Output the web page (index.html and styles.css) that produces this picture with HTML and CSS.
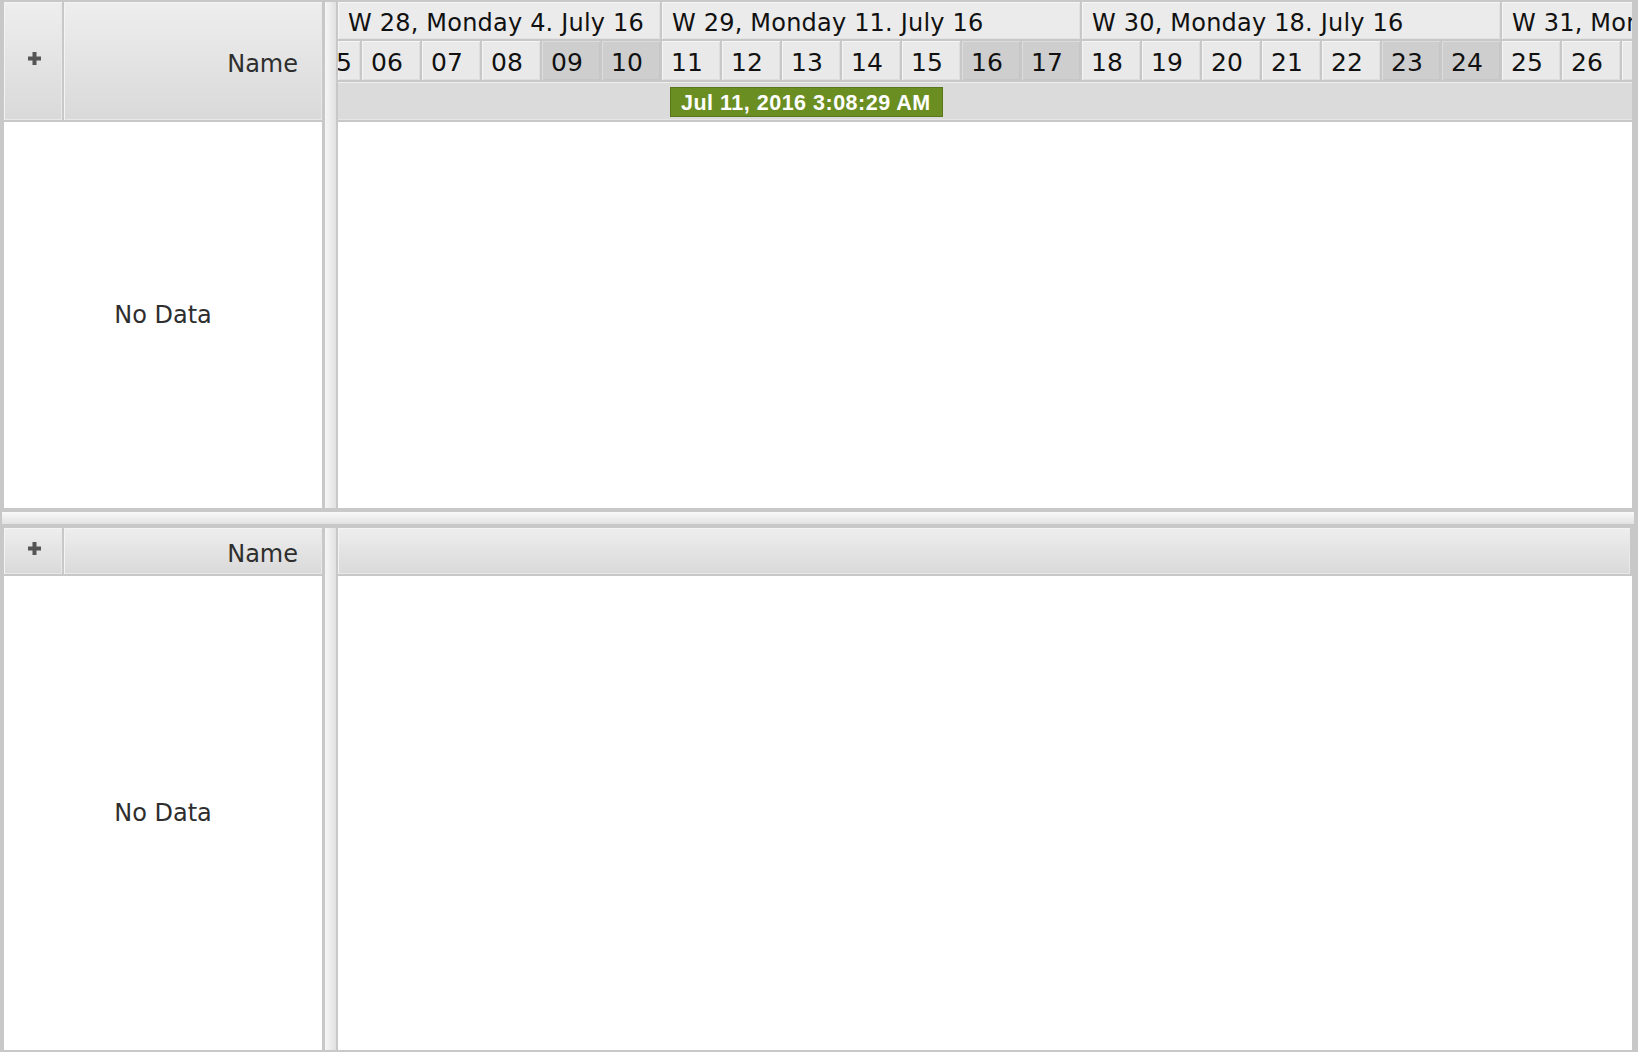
FILE: index.html
```html
<!DOCTYPE html>
<html>
<head>
<meta charset="utf-8">
<title>Gantt</title>
<link rel="stylesheet" href="styles.css">
</head>
<body>
<div class="app">
  <section class="pane pane-top">
    <div class="table">
      <div class="thead">
        <div class="hcell plus"><svg width="13" height="13" viewBox="0 0 13 13"><path d="M4.5 0h4v4.5h4.5v4h-4.5v4.5h-4v-4.5H0v-4h4.5z" fill="#555"/></svg></div>
        <div class="hcell name">Name</div>
      </div>
      <div class="tbody">No Data</div>
    </div>
    <div class="vsplit"></div>
    <div class="timeline">
      <div class="theader">
        <div class="weeks">
          <div class="week first">W 28, Monday 4. July 16</div>
          <div class="week">W 29, Monday 11. July 16</div>
          <div class="week">W 30, Monday 18. July 16</div>
          <div class="week">W 31, Monday 25. July 16</div>
        </div>
        <div class="days">
          <div class="day part">05</div>
          <div class="day">06</div>
          <div class="day">07</div>
          <div class="day">08</div>
          <div class="day we">09</div>
          <div class="day we">10</div>
          <div class="day">11</div>
          <div class="day">12</div>
          <div class="day">13</div>
          <div class="day">14</div>
          <div class="day">15</div>
          <div class="day we">16</div>
          <div class="day we">17</div>
          <div class="day">18</div>
          <div class="day">19</div>
          <div class="day">20</div>
          <div class="day">21</div>
          <div class="day">22</div>
          <div class="day we">23</div>
          <div class="day we">24</div>
          <div class="day">25</div>
          <div class="day">26</div>
          <div class="day">27</div>
        </div>
        <div class="band"><span class="now">Jul 11, 2016 3:08:29 AM</span></div>
      </div>
      <div class="tl-body"></div>
    </div>
  </section>
  <div class="hsplit"></div>
  <section class="pane pane-bottom">
    <div class="table">
      <div class="thead">
        <div class="hcell plus"><svg width="13" height="13" viewBox="0 0 13 13"><path d="M4.5 0h4v4.5h4.5v4h-4.5v4.5h-4v-4.5H0v-4h4.5z" fill="#555"/></svg></div>
        <div class="hcell name">Name</div>
      </div>
      <div class="tbody">No Data</div>
    </div>
    <div class="vsplit"></div>
    <div class="timeline">
      <div class="theader">
        <div class="hcell tl-empty"></div>
      </div>
      <div class="tl-body"></div>
    </div>
  </section>
</div>
</body>
</html>
```

FILE: styles.css
```css
* { box-sizing: border-box; }
html, body { margin: 0; padding: 0; }
body {
  font-family: "DejaVu Sans", "Liberation Sans", sans-serif;
  background: #c8c8c8;
}
.app {
  width: 1638px;
  height: 1052px;
  padding: 2px 4px 2px 2px;
  display: flex;
  flex-direction: column;
  background: #c8c8c8;
  overflow: hidden;
}
.pane {
  margin: 0 2px;
  display: flex;
  min-height: 0;
}
.pane-top { height: 506px; flex: none; }
.pane-bottom { flex: 1; }
.hsplit {
  flex: none;
  height: 12px;
  margin: 4px 0;
  background: linear-gradient(#f9f9f9, #e2e2e2);
}
.table {
  width: 318px;
  flex: none;
  display: flex;
  flex-direction: column;
  gap: 2px;
}
.thead {
  display: flex;
  gap: 2px;
  flex: none;
}
.pane-top .thead { height: 118px; }
.pane-bottom .thead { height: 46px; }
.hcell {
  background: linear-gradient(#eeeeee, #d9d9d9);
  box-shadow: inset 1px 1px 0 #f4f4f4, inset -1px -1px 0 #e9e9e9;
  display: flex;
  align-items: center;
}
.plus {
  width: 58px;
  justify-content: center;
}
.plus svg { margin: 0 0 5px 3px; }
.name {
  flex: 1;
  justify-content: flex-end;
  padding: 5px 24px 0 0;
  font-size: 24px;
  color: #2e2e2e;
}
.tbody {
  flex: 1;
  background: #fff;
  display: flex;
  align-items: center;
  justify-content: center;
  font-size: 24px;
  color: #2e2e2e;
}
.vsplit {
  width: 16px;
  flex: none;
  background: linear-gradient(to right, #c8c8c8 0, #c8c8c8 3px, #f6f6f6 3px, #e1e1e1 14px, #c8c8c8 14px);
}
.timeline {
  flex: 1;
  min-width: 0;
  display: flex;
  flex-direction: column;
  gap: 2px;
}
.theader {
  flex: none;
  display: flex;
  flex-direction: column;
  gap: 2px;
}
.pane-top .theader { height: 118px; }
.pane-bottom .theader { height: 46px; padding-right: 2px; }
.tl-empty { flex: 1; }
.weeks {
  height: 37px;
  display: flex;
  overflow: hidden;
  flex: none;
}
.week {
  flex: none;
  width: 420px;
  border-left: 2px solid #c8c8c8;
  background: #ebebeb;
  box-shadow: inset 1px 1px 0 #f5f5f5, inset -1px -1px 0 #e2e2e2;
  padding: 5px 0 0 10px;
  font-size: 24px;
  letter-spacing: 0.2px;
  color: #111;
  display: flex;
  align-items: center;
  white-space: nowrap;
}
.week.first { width: 322px; border-left: 0; }
.days {
  height: 39px;
  display: flex;
  overflow: hidden;
  flex: none;
}
.day {
  flex: none;
  width: 60px;
  border-left: 2px solid #c8c8c8;
  background: #e9e9e9;
  box-shadow: inset 1px 1px 0 #f5f5f5, inset -1px -1px 0 #dedede;
  padding: 3px 0 0 9px;
  font-size: 25px;
  color: #111;
  display: flex;
  align-items: center;
  white-space: nowrap;
}
.day.we { background: #cecece; box-shadow: inset 1px 1px 0 #dcdcdc, inset -1px -1px 0 #c6c6c6; }
.day.part {
  width: 22px;
  border-left: 0;
  padding: 3px 8px 0 0;
  justify-content: flex-end;
  overflow: hidden;
}
.band {
  flex: 1;
  background: #dbdbdb;
  box-shadow: inset 0 1px 0 #eeeeee, inset 0 -1px 0 #e6e6e6;
  display: flex;
  align-items: center;
  padding-top: 1px;
}
.now {
  margin-left: 332px;
  width: 273px;
  height: 30px;
  background: #6b8e23;
  border: 1px solid #58771a;
  color: #fff;
  font-family: "Liberation Sans", Arial, sans-serif;
  font-weight: bold;
  font-size: 21.5px;
  letter-spacing: 0.5px;
  display: flex;
  align-items: center;
  padding: 3px 0 0 10px;
  white-space: nowrap;
}
.tl-body {
  flex: 1;
  background: #fff;
}
```
